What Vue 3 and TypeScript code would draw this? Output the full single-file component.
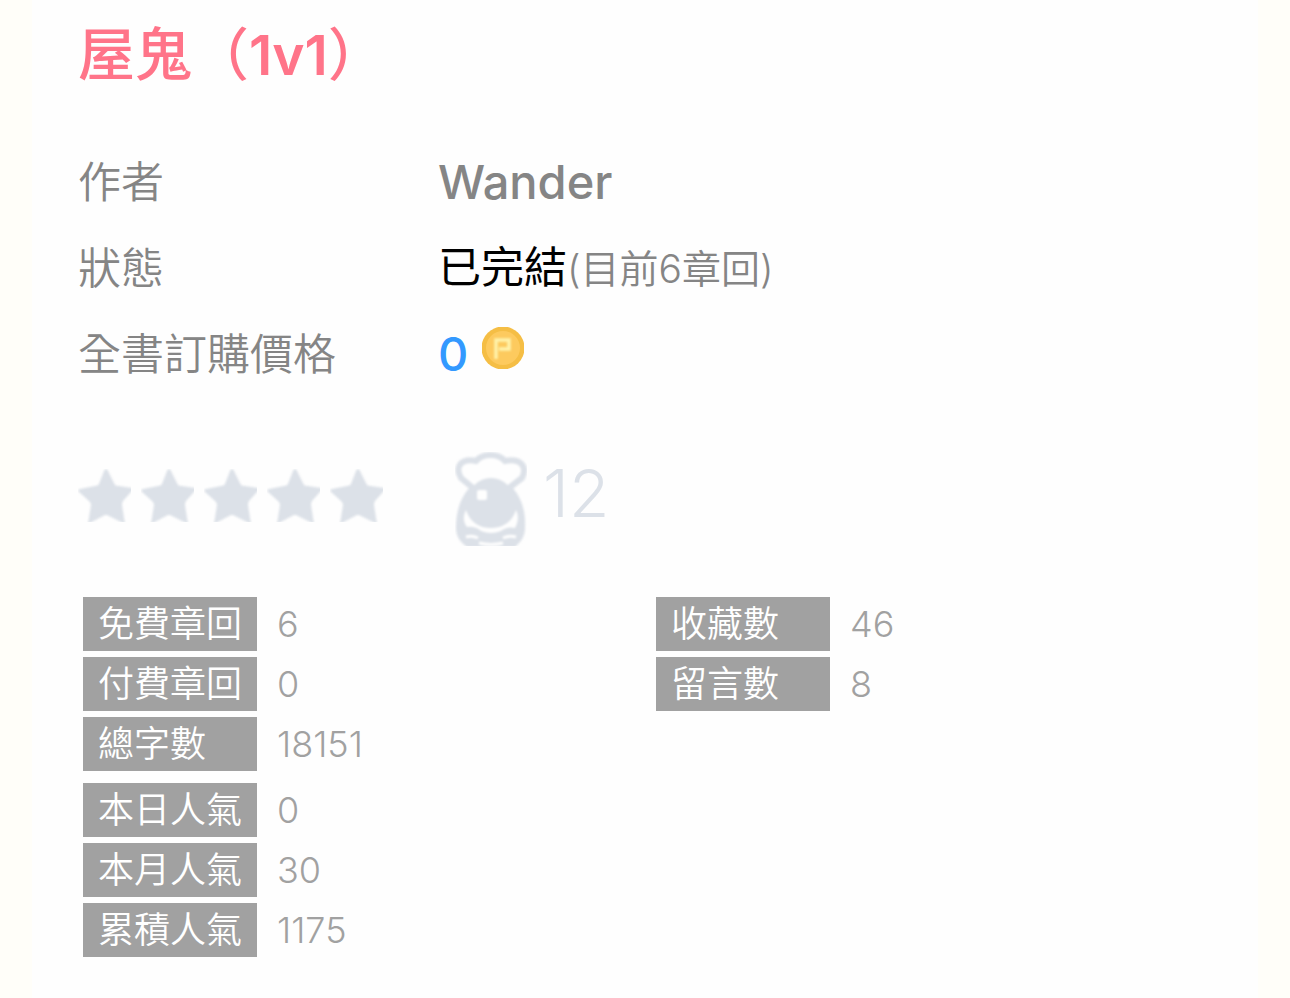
<script setup lang="ts">
interface Stat {
  label: string
  value: number
}

const chapterStats: Stat[] = [
  { label: '免費章回', value: 6 },
  { label: '付費章回', value: 0 },
  { label: '總字數', value: 18151 },
]

const readerStats: Stat[] = [
  { label: '收藏數', value: 46 },
  { label: '留言數', value: 8 },
]

const popularityStats: Stat[] = [
  { label: '本日人氣', value: 0 },
  { label: '本月人氣', value: 30 },
  { label: '累積人氣', value: 1175 },
]
</script>

<template>
  <div class="page">
    <main class="panel">
      <h1 class="title">屋鬼<span class="paren">（</span><span class="pairing">1v1</span><span class="paren">）</span></h1>

      <dl class="info">
        <dt>作者</dt>
        <dd><a class="author" href="#author">Wander</a></dd>
        <dt>狀態</dt>
        <dd><span class="status">已完結</span><span class="chapters">(目前6章回)</span></dd>
        <dt>全書訂購價格</dt>
        <dd class="price-row">
          <span class="price">0</span>
          <svg class="coin" viewBox="0 0 42 42" role="img" aria-label="P幣">
            <circle cx="21" cy="21" r="21.5" fill="#f5be45" />
            <circle cx="21" cy="21" r="17" fill="#fdca5e" />
            <path d="M14 32V13H27V22H17" fill="none" stroke="#fff3ac" stroke-width="3.5" />
          </svg>
        </dd>
      </dl>

      <div class="feedback">
        <div class="stars" role="img" aria-label="0 / 5">
          <svg v-for="n in 5" :key="n" class="star" viewBox="0 0 53 53">
            <path d="M28 0Q29 0 30 2L37 16Q38 17 41 17L54 19Q57 20 53 23L45 32Q44 33 44 36L47 55L31 47Q28 45 25 47L10 55L13 36Q13 34 11 32L1 23Q-1 21 2 20L17 17Q20 17 21 15L26 2Q27 0 28 0Z" />
          </svg>
        </div>
        <div class="pearls">
          <svg class="pearl" viewBox="0 0 72 94" role="img" aria-label="珍珠">
            <g class="pearl-shape">
              <path d="M17 33H55C66 44 71 58 70 76C70 84 66 90 60 95H12C5 90 1 84 1 76C1 58 6 44 17 33Z" fill="#dce1e8" />
              <path d="M18 36L6 26C-1 14 7 6 21 9C28 1 43 1 50 9C65 6 73 14 67 26L54 36" fill="#fefefe" stroke="#dce1e8" stroke-width="6" />
              <path d="M11 58C15 70 24 76 36 76C48 76 57 70 61 58C64 64 63 71 60 76Q52 74 46 79Q36 83 26 79Q20 74 12 75C8 70 8 64 11 58Z" fill="#fefefe" />
              <path d="M11 85Q17 83 23 86M48 86Q54 83 61 85M24 91Q36 94 48 91" fill="none" stroke="#fefefe" stroke-width="3" />
              <circle cx="36" cy="49" r="23" fill="#dce1e8" />
              <rect x="22" y="38" width="10" height="10" rx="2" fill="#fefefe" />
            </g>
          </svg>
          <span class="pearl-count">12</span>
        </div>
      </div>

      <div class="stats">
        <dl class="stat-group">
          <div v-for="s in chapterStats" :key="s.label" class="stat">
            <dt>{{ s.label }}</dt>
            <dd>{{ s.value }}</dd>
          </div>
        </dl>
        <dl class="stat-group">
          <div v-for="s in readerStats" :key="s.label" class="stat">
            <dt>{{ s.label }}</dt>
            <dd>{{ s.value }}</dd>
          </div>
        </dl>
        <dl class="stat-group">
          <div v-for="s in popularityStats" :key="s.label" class="stat">
            <dt>{{ s.label }}</dt>
            <dd>{{ s.value }}</dd>
          </div>
        </dl>
      </div>
    </main>
  </div>
</template>

<style>
body {
  margin: 0;
  background: #fffef9;
}
</style>

<style scoped>
.page {
  padding: 0 32px;
  font-family: Inter, "Noto Sans CJK TC", sans-serif;
  color: #858585;
}

.panel {
  box-sizing: border-box;
  min-height: 100vh;
  padding: 16px 29px 42px 46px;
  background: #fefefe;
}

.title {
  margin: 0;
  font-size: 57px;
  line-height: 68px;
  font-weight: 500;
  color: #ff7489;
}

.paren {
  font-family: "Noto Sans CJK SC", sans-serif;
}

.pairing {
  font-size: 55px;
  font-weight: 600;
}

.info {
  display: grid;
  grid-template-columns: 360px 1fr;
  grid-auto-rows: 86px;
  align-items: center;
  margin: 50px 0 0;
  font-size: 43px;
  line-height: 60px;
  font-weight: 350;
}

.info dd {
  margin: 0;
}

.author {
  font-size: 47px;
  font-weight: 500;
  color: inherit;
  text-decoration: none;
}

.status {
  color: #000;
  font-weight: 400;
}

.chapters {
  font-size: 39px;
}

.price-row {
  display: flex;
  align-items: center;
  gap: 14px;
}

.price {
  font-size: 47px;
  font-weight: 500;
  color: #3399ff;
}

.coin {
  width: 42px;
  height: 42px;
  margin-bottom: 12px;
}

.feedback {
  display: flex;
  align-items: center;
  gap: 72px;
  margin-top: 55px;
}

.stars {
  display: flex;
  gap: 10px;
  margin-bottom: 8px;
}

.star {
  width: 53px;
  height: 53px;
  fill: #dce1e8;
}

.star path,
.coin path,
.pearl-shape {
  filter: blur(1px);
}

.pearls {
  display: flex;
  align-items: center;
  gap: 16px;
}

.pearl {
  width: 72px;
  height: 94px;
}

.pearl-count {
  margin-bottom: 12px;
  font-size: 66px;
  line-height: 80px;
  font-weight: 350;
  color: #dce1e8;
}

.stats {
  display: grid;
  grid-template-columns: 1fr 1fr;
  row-gap: 12px;
  margin: 51px 0 0 5px;
  font-size: 36px;
  line-height: 54px;
  font-weight: 350;
  color: #a1a1a1;
}

.stat-group {
  display: flex;
  flex-direction: column;
  gap: 6px;
  margin: 0;
}

.stat {
  display: flex;
  gap: 20px;
}

.stat dt {
  box-sizing: border-box;
  width: 174px;
  height: 54px;
  padding-left: 15px;
  background: #a1a1a1;
  color: #fff;
  white-space: nowrap;
}

.stat dd {
  margin: 0;
}
</style>
